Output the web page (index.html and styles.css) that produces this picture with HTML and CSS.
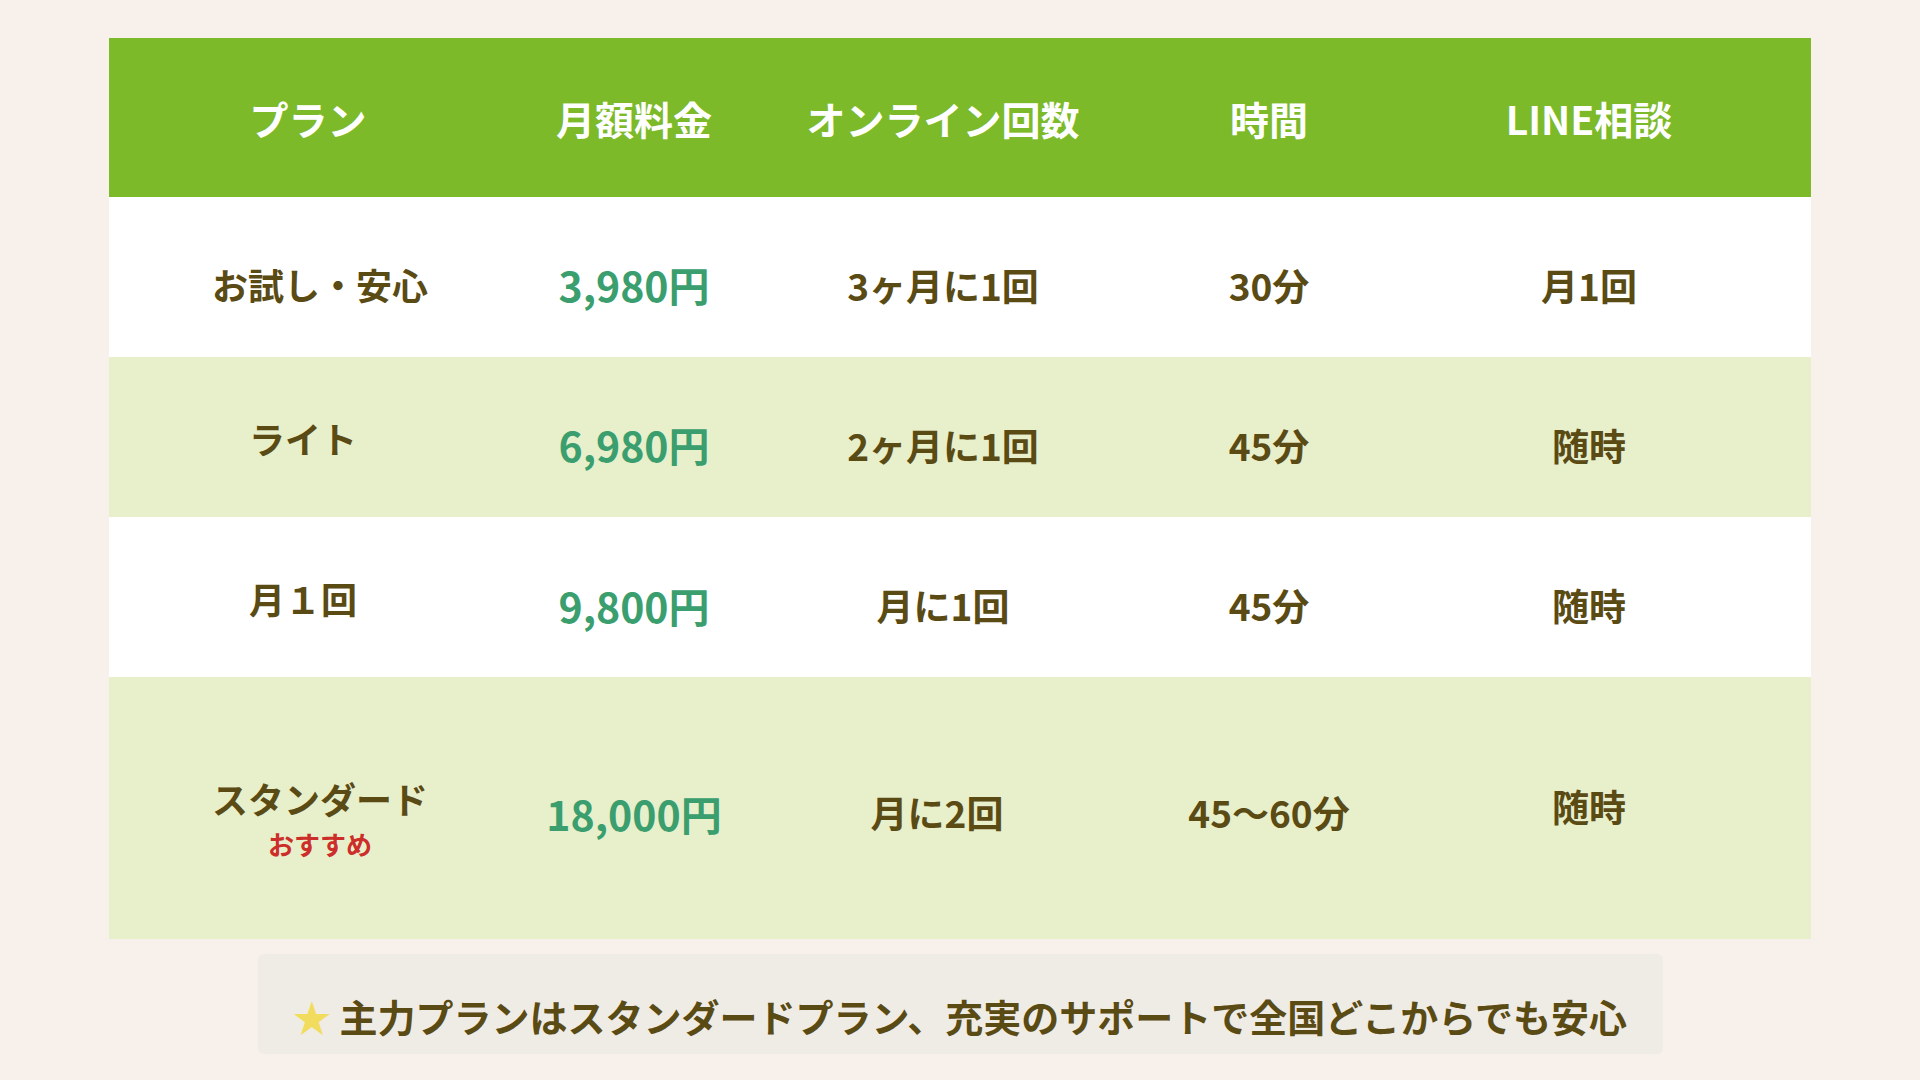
FILE: index.html
```html
<!DOCTYPE html>
<html lang="ja">
<head>
<meta charset="utf-8">
<title>料金プラン</title>
<link rel="stylesheet" href="styles.css">
</head>
<body>
<main class="page">
  <section class="table">
    <div class="row head">
      <div class="cell">プラン</div>
      <div class="cell">月額料金</div>
      <div class="cell">オンライン回数</div>
      <div class="cell">時間</div>
      <div class="cell">LINE相談</div>
    </div>
    <div class="row body white">
      <div class="cell plan nudge-r">お試し・安心</div>
      <div class="cell price">3,980円</div>
      <div class="cell">3ヶ月に1回</div>
      <div class="cell">30分</div>
      <div class="cell">月1回</div>
    </div>
    <div class="row body tint">
      <div class="cell plan up nudge-l">ライト</div>
      <div class="cell price">6,980円</div>
      <div class="cell">2ヶ月に1回</div>
      <div class="cell">45分</div>
      <div class="cell">随時</div>
    </div>
    <div class="row body white">
      <div class="cell plan up nudge-l">月１回</div>
      <div class="cell price low">9,800円</div>
      <div class="cell">月に1回</div>
      <div class="cell">45分</div>
      <div class="cell">随時</div>
    </div>
    <div class="row body tint tall">
      <div class="cell plan nudge-r stack">
        <span class="plan-name">スタンダード</span>
        <span class="badge">おすすめ</span>
      </div>
      <div class="cell price mid">18,000円</div>
      <div class="cell small-off nudge-l2">月に2回</div>
      <div class="cell small-off">45〜60分</div>
      <div class="cell raised">随時</div>
    </div>
  </section>
  <p class="note"><span class="note-text"><span class="star">★</span> 主力プランはスタンダードプラン、充実のサポートで全国どこからでも安心</span></p>
</main>
</body>
</html>
```

FILE: styles.css
```css
* { box-sizing: border-box; }

html, body {
  margin: 0;
  padding: 0;
}

body {
  background: #f8f1eb;
  font-family: "Noto Sans CJK JP", "Noto Sans", sans-serif;
  color: #5a4a14;
  width: 1920px;
  height: 1080px;
  overflow: hidden;
}

.page {
  padding-top: 38px;
  display: flex;
  flex-direction: column;
  align-items: center;
}

.table {
  width: 1702px;
  display: flex;
  flex-direction: column;
}

.row {
  display: grid;
  grid-template-columns: 398px 254px 364px 288px 352px;
  padding-right: 46px;
}

.cell {
  display: flex;
  flex-direction: column;
  align-items: center;
  justify-content: center;
  text-align: center;
  white-space: nowrap;
  line-height: 1.2;
}

.head {
  height: 159px;
  background: #7cba29;
  color: #ffffff;
  font-size: 39px;
  font-weight: 700;
}

.head .cell { padding-top: 2px; }

.body {
  height: 160px;
  font-size: 37px;
  font-weight: 700;
}

.body .cell { padding-top: 16px; }

.white { background: #ffffff; }
.tint { background: #e8efcb; }

.tall { height: 262px; }

.body .plan { font-size: 36px; }
.body .plan.up { padding-top: 3px; }
.nudge-r { padding-left: 24px; }
.nudge-l { padding-right: 10px; }
.nudge-l2 { padding-right: 12px; }

.price {
  color: #3a9e6e;
  font-size: 41px;
  font-weight: 700;
}

.body .price.low { padding-top: 18px; }
.body .price.mid { padding-top: 12px; }
.body .small-off { padding-top: 8px; }
.body .raised { padding-top: 0; padding-bottom: 4px; }

.body .stack { padding-top: 20px; }
.plan-name { display: block; }
.badge {
  display: block;
  margin-top: 7px;
  font-size: 26px;
  font-weight: 700;
  color: #cc2e2a;
}

.note {
  margin: 15px 0 0;
  width: 1405px;
  height: 100px;
  background: #efece5;
  border-radius: 6px;
  display: flex;
  align-items: center;
  justify-content: center;
  padding-top: 22px;
  font-size: 38px;
  font-weight: 700;
  color: #5a4a14;
  white-space: nowrap;
}

.note-text { display: block; }

.star {
  color: #f2dc5d;
}
```
